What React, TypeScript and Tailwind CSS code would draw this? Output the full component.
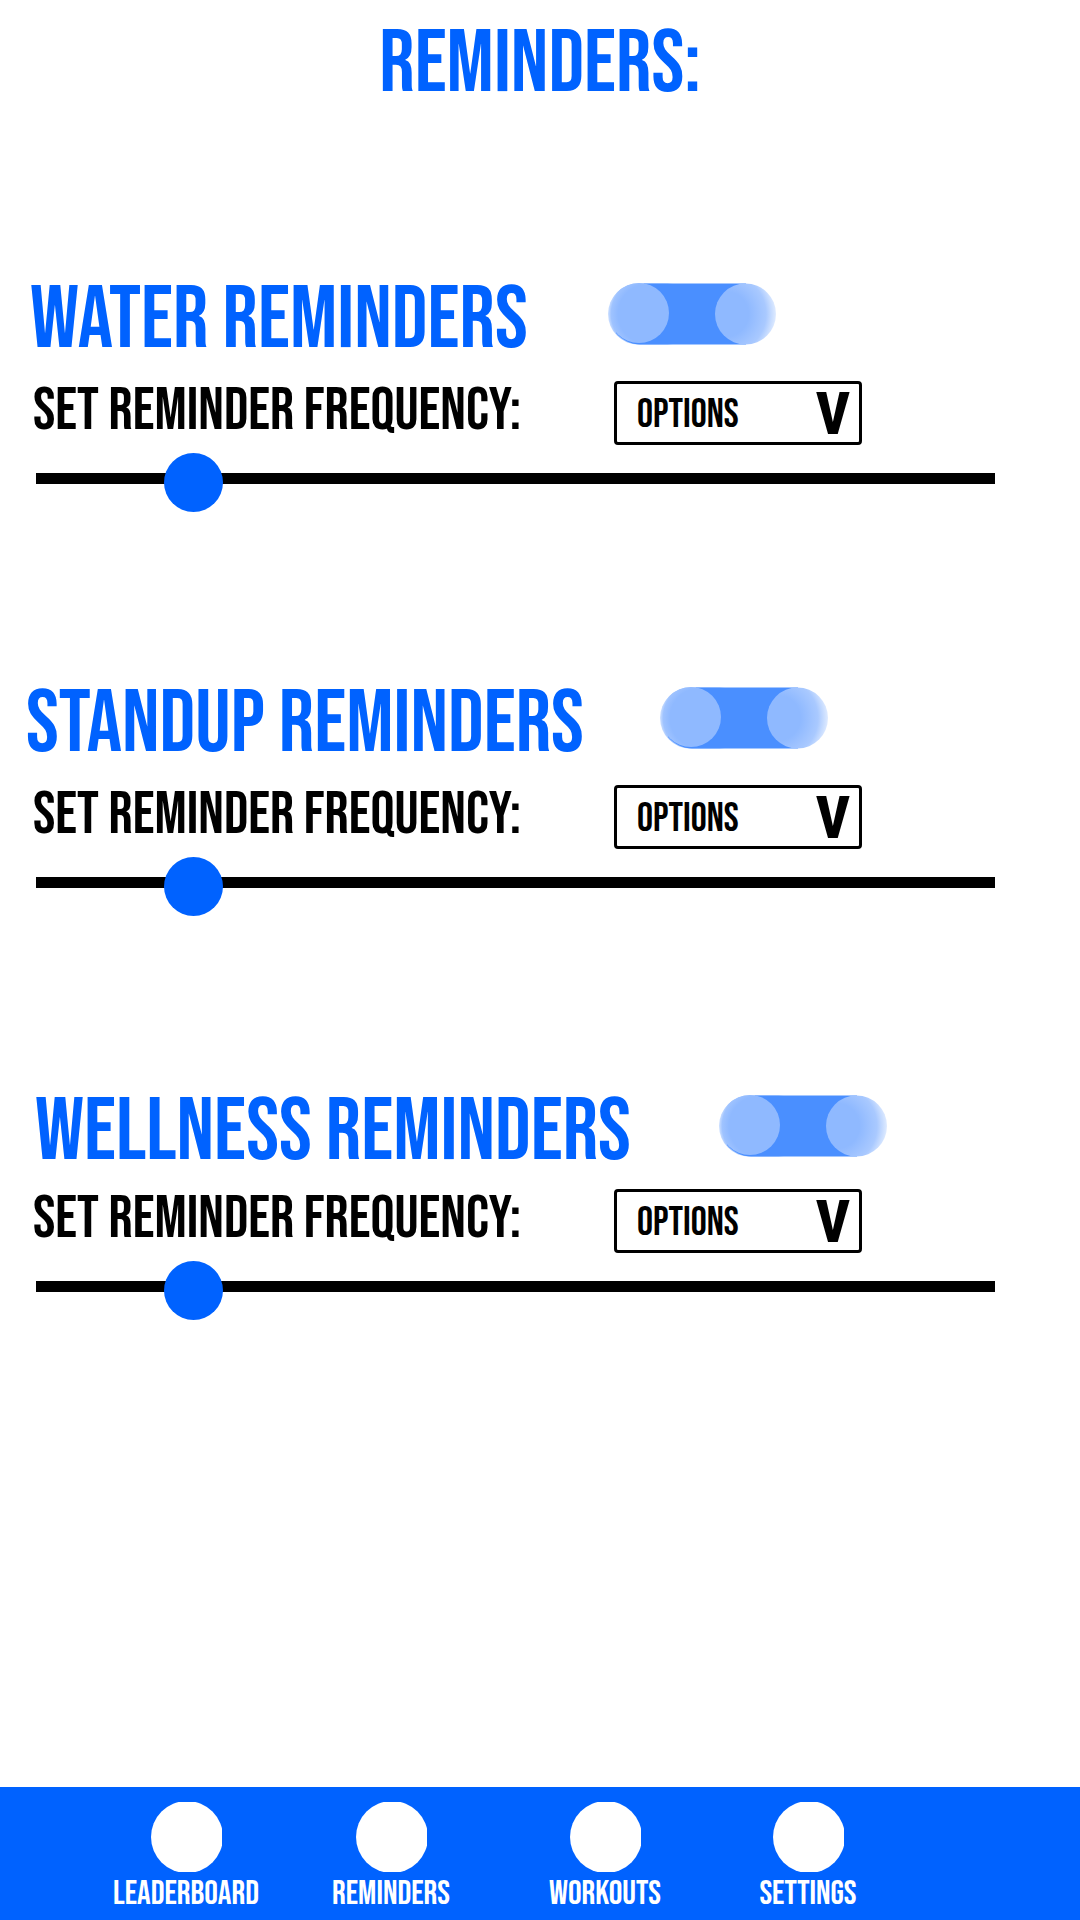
type Reminder = { id: string; title: string; row: string };

const reminders: Reminder[] = [
  { id: "water", title: "Water Reminders", row: "pl-[30px] gap-20" },
  { id: "standup", title: "Standup Reminders", row: "pl-[26px] gap-[76px]" },
  { id: "wellness", title: "Wellness Reminders", row: "pl-[35px] gap-[88px] pt-1" },
];

const tabs = ["Leaderboard", "Reminders", "Workouts", "Settings"];

function Toggle({ id, label }: { id: string; label: string }) {
  return (
    <label className="relative mt-[6px] block h-[62px] w-[168px] shrink-0 cursor-pointer">
      <input id={id} type="checkbox" aria-label={label} className="absolute inset-0 size-full cursor-pointer opacity-0" />
      <svg viewBox="0 0 168 62" className="pointer-events-none block size-full" aria-hidden="true">
        <defs>
          <radialGradient id={`${id}-left`} gradientUnits="userSpaceOnUse" cx="40" cy="31" r="40">
            <stop offset="0.75" stopColor="#8fb9ff" />
            <stop offset="0.92" stopColor="#9fc3ff" />
            <stop offset="1" stopColor="#cfe1ff" />
          </radialGradient>
          <radialGradient id={`${id}-right`} gradientUnits="userSpaceOnUse" cx="118" cy="31" r="50">
            <stop offset="0.45" stopColor="#8fb9ff" />
            <stop offset="0.8" stopColor="#a9c9ff" />
            <stop offset="1" stopColor="#dfebff" />
          </radialGradient>
        </defs>
        <rect x="0" y="0.5" width="90" height="61" rx="30.5" fill={`url(#${id}-left)`} />
        <path d="M36 0.5H138V61.5H32C24 61.5 14 57 8 50Z" fill="#4a8fff" />
        <circle cx="31" cy="30" r="30" fill={`url(#${id}-left)`} />
        <circle cx="137.5" cy="31" r="30.5" fill={`url(#${id}-right)`} />
      </svg>
    </label>
  );
}

function ReminderSection({ id, title, row }: Reminder) {
  return (
    <section>
      <div className={`flex h-[104px] items-start ${row}`}>
        <h2 className="text-[88px] leading-none whitespace-nowrap text-[#0062ff]">{title}</h2>
        <Toggle id={`${id}-enabled`} label={title} />
      </div>
      <div className="flex items-start gap-[93px] pl-[33px]">
        <label htmlFor={`${id}-frequency`} className="text-[60px] leading-none whitespace-nowrap">
          Set reminder frequency:
        </label>
        <div className="relative h-16 w-[248px]">
          <select
            id={`${id}-frequency`}
            className="block size-full appearance-none rounded-sm border-3 border-black bg-white pt-1 pl-5 font-[inherit] text-[40px] leading-none uppercase"
          >
            <option>Options</option>
          </select>
          <span
            aria-hidden="true"
            className="pointer-events-none absolute top-0 right-3 font-['Roboto_Condensed',sans-serif] text-[59px] leading-[66px] font-extrabold"
          >
            V
          </span>
        </div>
      </div>
      <input
        type="range"
        aria-label={`${title} frequency`}
        min={0}
        max={1000}
        defaultValue={142}
        className="mt-2 mr-[85px] ml-9 block h-[51px] w-[calc(100%-121px)] cursor-pointer appearance-none bg-transparent [&::-webkit-slider-runnable-track]:h-[11px] [&::-webkit-slider-runnable-track]:bg-black [&::-webkit-slider-thumb]:-mt-5 [&::-webkit-slider-thumb]:size-[59px] [&::-webkit-slider-thumb]:appearance-none [&::-webkit-slider-thumb]:rounded-full [&::-webkit-slider-thumb]:bg-[#0062ff]"
      />
    </section>
  );
}

export default function App() {
  return (
    <div className="flex min-h-screen flex-col bg-white font-['Bebas_Neue','Roboto_Condensed',sans-serif] text-black uppercase">
      <header className="pt-[21px] text-center">
        <h1 className="text-[88px] leading-none text-[#0062ff]">Reminders:</h1>
      </header>
      <main className="mt-[168px] flex grow flex-col gap-[177px]">
        {reminders.map((r) => (
          <ReminderSection key={r.id} {...r} />
        ))}
      </main>
      <nav aria-label="Main" className="grid grid-cols-[206fr_204fr_224fr_182fr] bg-[#0062ff] pt-[15px] pr-[181px] pb-[9px] pl-[83px] text-white">
        {tabs.map((tab) => (
          <a key={tab} href={`#${tab.toLowerCase()}`} className="flex flex-col items-center gap-[5px]">
            <svg viewBox="0 0 71 70" className="h-[70px] w-[71px]" aria-hidden="true">
              <circle cx="36" cy="35" r="36" fill="white" />
            </svg>
            <span className="text-[34px] leading-none">{tab}</span>
          </a>
        ))}
      </nav>
    </div>
  );
}
